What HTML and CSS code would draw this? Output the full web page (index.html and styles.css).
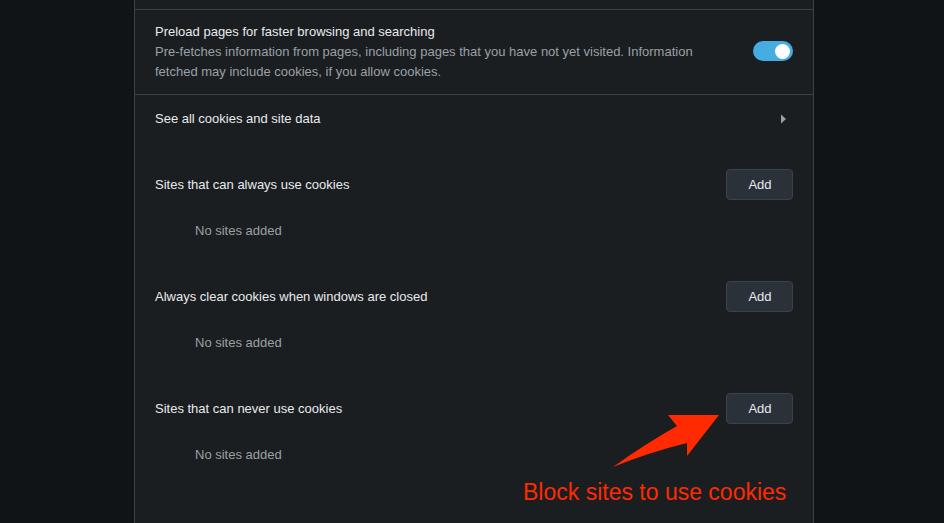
FILE: index.html
```html
<!DOCTYPE html>
<html lang="en">
<head>
<meta charset="utf-8">
<title>Cookies settings</title>
<link rel="stylesheet" href="styles.css">
</head>
<body>
<main class="page">
  <section class="card">
    <div class="card-top"></div>
    <div class="row row-preload">
      <div class="row-text">
        <div class="title">Preload pages for faster browsing and searching</div>
        <div class="sub">Pre-fetches information from pages, including pages that you have not yet visited. Information fetched may include cookies, if you allow cookies.</div>
      </div>
      <div class="toggle" role="switch" aria-checked="true"><span class="knob"></span></div>
    </div>
    <div class="row row-link">
      <div class="title">See all cookies and site data</div>
      <svg class="chevron" width="20" height="20" viewBox="0 0 20 20" aria-hidden="true"><polygon points="8,5.5 13,10 8,14.5" fill="#9aa0a6"/></svg>
    </div>
    <div class="site-section">
      <div class="site-head">
        <div class="title">Sites that can always use cookies</div>
        <button class="add-btn">Add</button>
      </div>
      <div class="empty">No sites added</div>
    </div>
    <div class="site-section">
      <div class="site-head">
        <div class="title">Always clear cookies when windows are closed</div>
        <button class="add-btn">Add</button>
      </div>
      <div class="empty">No sites added</div>
    </div>
    <div class="site-section">
      <div class="site-head">
        <div class="title">Sites that can never use cookies</div>
        <button class="add-btn">Add</button>
      </div>
      <div class="empty">No sites added</div>
    </div>
  </section>
  <svg class="annot-arrow" width="944" height="523" viewBox="0 0 944 523" aria-hidden="true">
    <path d="M613,467 Q645,444 677,426 L668,415 L719,415 L687,456 L687,443 Q650,452 613,467 Z" fill="#ff2a00"/>
  </svg>
  <div class="annot-text">Block sites to use cookies</div>
</main>
</body>
</html>
```
FILE: styles.css
```css
html, body {
  margin: 0;
  padding: 0;
  height: 100%;
  overflow: hidden;
  background: #111417;
}
.page {
  position: relative;
  width: 944px;
  height: 523px;
  font-family: "Liberation Sans", Arial, sans-serif;
  font-size: 13px;
  line-height: 20px;
  color: #e8eaed;
}
.card {
  box-sizing: border-box;
  width: 680px;
  height: 523px;
  margin-left: 134px;
  background: #1b1e21;
  border-left: 1px solid #3c4148;
  border-right: 1px solid #3c4148;
}
.card-top {
  height: 9px;
}
.row {
  display: flex;
  align-items: center;
  justify-content: space-between;
  padding: 0 20px;
  border-top: 1px solid #3c4148;
}
.row-preload {
  padding-top: 12px;
  padding-bottom: 12px;
}
.row-text {
  width: 560px;
}
.title {
  color: #e8eaed;
}
.sub {
  color: #9aa0a6;
}
.toggle {
  position: relative;
  width: 40px;
  height: 20px;
  margin-top: -2px;
  border-radius: 10px;
  background: #46ade3;
  flex: none;
}
.knob {
  position: absolute;
  top: 2.5px;
  right: 3.5px;
  width: 15px;
  height: 15px;
  border-radius: 50%;
  background: #ffffff;
}
.row-link {
  box-sizing: border-box;
  height: 47px;
  padding-top: 2px;
}
.row-link .chevron {
  margin-top: -1px;
}
.chevron {
  display: block;
  flex: none;
}
.site-section {
  padding: 28px 20px 12px;
}
.site-head {
  display: flex;
  align-items: center;
  justify-content: space-between;
  height: 31px;
}
.site-head .title {
  padding-top: 1px;
}
.add-btn {
  box-sizing: border-box;
  width: 67px;
  height: 31px;
  padding: 0 0 0 1px;
  border: 1px solid #3b424b;
  border-radius: 4px;
  background: #2a3139;
  color: #e8eaed;
  font-family: "Liberation Sans", Arial, sans-serif;
  font-size: 13px;
}
.empty {
  margin-top: 21px;
  padding-left: 40px;
  color: #9aa0a6;
}
.annot-arrow {
  position: absolute;
  left: 0;
  top: 0;
}
.annot-text {
  position: absolute;
  left: 523px;
  top: 479px;
  font-size: 23px;
  line-height: 26px;
  color: #ff2a00;
  white-space: nowrap;
}
```
